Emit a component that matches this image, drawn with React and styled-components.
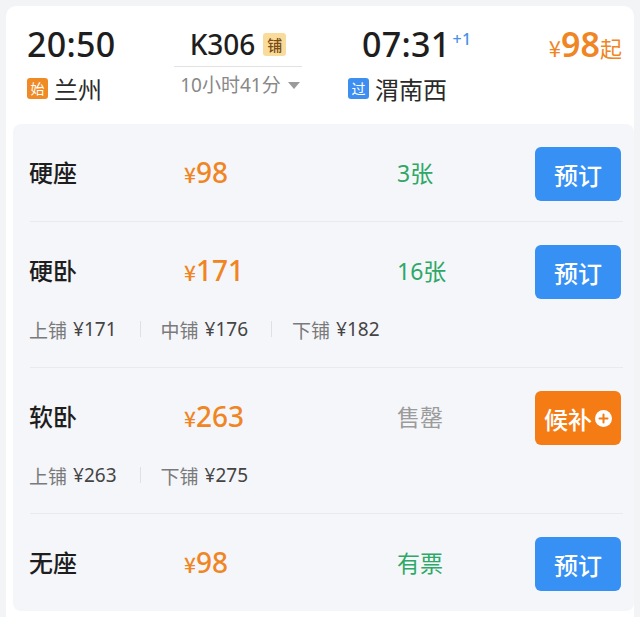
import React from "react";
import styled, { createGlobalStyle } from "styled-components";

const Global = createGlobalStyle`
  html, body { margin: 0; padding: 0; background: #f3f4f6; }
  body { font-family: "Noto Sans", "Noto Sans CJK SC", sans-serif; color: #222; }
  * { box-sizing: border-box; }
`;

const Card = styled.div`
  margin: 6px 6px 0 6px;
  background: #fff;
  border-radius: 10px 10px 0 0;
  padding: 0 0 6px 7px;
`;

const Header = styled.div`
  display: flex;
  align-items: flex-start;
  padding: 18px 12px 22px 14px;
`;

const Col = styled.div`
  display: flex;
  flex-direction: column;
  width: ${(p) => p.$w || "auto"};
  flex: ${(p) => (p.$grow ? 1 : "none")};
  margin-left: ${(p) => p.$ml || 0};
`;

const Time = styled.div`
  font-size: 34px;
  line-height: 40px;
  color: #1e1e1e;
  font-weight: 500;
  letter-spacing: 0.3px;
  padding-left: ${(p) => p.$indent || "0px"};
  display: flex;
  align-items: flex-start;
`;

const Sup = styled.span`
  font-size: 16px;
  line-height: 22px;
  color: #4b8fe6;
  margin-left: 2px;
  margin-top: 4px;
`;

const Station = styled.div`
  display: flex;
  align-items: center;
  margin-top: 10px;
  height: 28px;
  font-size: 24px;
  color: #2a2a2a;
  font-family: "Noto Sans CJK SC", sans-serif;
`;

const Badge = styled.span`
  display: inline-flex;
  align-items: center;
  justify-content: center;
  width: ${(p) => p.$size || "21px"};
  height: ${(p) => p.$size || "21px"};
  border-radius: 3px;
  background: ${(p) => p.$bg};
  color: ${(p) => p.$fg || "#fff"};
  font-size: ${(p) => p.$font || "14px"};
  line-height: 1;
  margin: ${(p) => p.$margin || "0 6px 0 0"};
  font-family: "Noto Sans CJK SC", sans-serif;
`;

const Train = styled.div`
  display: flex;
  align-items: center;
  justify-content: center;
  height: 40px;
  font-size: 28px;
  color: #1e1e1e;
  font-weight: 500;
  border-bottom: 1px solid #e2e2e2;
  padding-bottom: 2px;
  box-sizing: content-box;
`;

const Duration = styled.div`
  display: flex;
  align-items: center;
  justify-content: center;
  height: 28px;
  margin-top: 3px;
  font-size: 19px;
  color: #888;
  padding-left: 4px;
`;

const Tri = styled.span`
  width: 0;
  height: 0;
  border-left: 6px solid transparent;
  border-right: 6px solid transparent;
  border-top: 7px solid #9a9a9a;
  margin-left: 7px;
  margin-top: 3px;
`;

const From = styled.div`
  display: flex;
  align-items: baseline;
  color: #f08524;
  height: 40px;
  line-height: 40px;
`;

const Small = styled.span`
  font-size: ${(p) => p.$size || "22px"};
  font-weight: ${(p) => p.$weight || 400};
  font-family: "Noto Sans CJK SC", sans-serif;
`;

const Big = styled.span`
  font-size: ${(p) => p.$size || "34px"};
  font-weight: ${(p) => p.$weight || 600};
`;

const Panel = styled.div`
  background: #f5f6fa;
  border-radius: 8px;
`;

const Row = styled.div`
  display: flex;
  flex-direction: column;
  padding: 23px 13px 20px 16px;
`;

const Main = styled.div`
  display: grid;
  grid-template-columns: 155px 213px 1fr auto;
  align-items: center;
  height: 54px;
`;

const Name = styled.div`
  font-size: 24px;
  font-weight: 500;
  color: #1e1e1e;
  padding-bottom: 5px;
  font-family: "Noto Sans CJK SC", sans-serif;
`;

const Price = styled.div`
  display: flex;
  align-items: baseline;
  color: #f08524;
  padding-bottom: 4px;
`;

const Count = styled.div`
  font-size: 23px;
  padding-bottom: 4px;
  color: ${(p) => (p.$sold ? "#9b9b9b" : "#2ea866")};
  font-family: "Noto Sans", "Noto Sans CJK SC", sans-serif;
`;

const Button = styled.div`
  width: 86px;
  height: 54px;
  border-radius: 6px;
  background: ${(p) => (p.$wait ? "#f57c14" : "#3790f3")};
  color: #fff;
  font-size: 24px;
  font-weight: 500;
  display: flex;
  align-items: center;
  justify-content: center;
  font-family: "Noto Sans CJK SC", sans-serif;
`;

const Plus = styled.span`
  width: 17px;
  height: 17px;
  border-radius: 50%;
  background: #fff;
  margin-left: 3px;
  display: inline-flex;
  align-items: center;
  justify-content: center;
`;

const Sub = styled.div`
  display: flex;
  align-items: center;
  height: 24px;
  margin-top: 18px;
  margin-bottom: 6px;
  font-size: 19px;
  color: #444;
`;

const Label = styled.span`
  color: #7a7a7a;
  margin-right: 6px;
  font-family: "Noto Sans CJK SC", sans-serif;
`;

const VSep = styled.span`
  width: 1px;
  height: 16px;
  background: #e0e0e0;
  margin: 0 20px 0 23px;
`;

const HSep = styled.div`
  height: 1px;
  background: #e8eaee;
  margin: 0 11px 0 17px;
`;

const seats = [
  { name: "硬座", price: "98", count: "3张" },
  {
    name: "硬卧",
    price: "171",
    count: "16张",
    sub: [
      ["上铺", "171"],
      ["中铺", "176"],
      ["下铺", "182"],
    ],
  },
  {
    name: "软卧",
    price: "263",
    count: "售罄",
    sold: true,
    sub: [
      ["上铺", "263"],
      ["下铺", "275"],
    ],
  },
  { name: "无座", price: "98", count: "有票" },
];

export default function App() {
  return (
    <>
      <Global />
      <Card>
        <Header>
          <Col $w="147px">
            <Time>20:50</Time>
            <Station>
              <Badge $bg="#f08a24">始</Badge>兰州
            </Station>
          </Col>
          <Col $w="128px">
            <Train>
              K306
              <Badge $bg="#f9dc9c" $fg="#7a4b12" $size="23px" $font="15px" $margin="0 0 0 8px">
                铺
              </Badge>
            </Train>
            <Duration>
              10小时41分<Tri />
            </Duration>
          </Col>
          <Col $grow $ml="46px">
            <Time $indent="14px">
              07:31<Sup>+1</Sup>
            </Time>
            <Station>
              <Badge $bg="#3d8ef0">过</Badge>渭南西
            </Station>
          </Col>
          <Col>
            <From>
              <Small>¥</Small>
              <Big>98</Big>
              <Small>起</Small>
            </From>
          </Col>
        </Header>
        <Panel>
          {seats.map((s, i) => (
            <React.Fragment key={s.name}>
              {i > 0 && <HSep />}
              <Row>
                <Main>
                  <Name>{s.name}</Name>
                  <Price>
                    <Small $size="21px" $weight={500}>¥</Small>
                    <Big $size="28px" $weight={500}>{s.price}</Big>
                  </Price>
                  <Count $sold={s.sold}>{s.count}</Count>
                  {s.sold ? (
                    <Button $wait>
                      候补
                      <Plus>
                        <svg width="11" height="11" viewBox="0 0 11 11">
                          <path d="M5.5 1.5v8M1.5 5.5h8" stroke="#f57c14" strokeWidth="2" strokeLinecap="round" />
                        </svg>
                      </Plus>
                    </Button>
                  ) : (
                    <Button>预订</Button>
                  )}
                </Main>
                {s.sub && (
                  <Sub>
                    {s.sub.map(([l, p], j) => (
                      <React.Fragment key={l}>
                        {j > 0 && <VSep />}
                        <Label>{l}</Label>¥{p}
                      </React.Fragment>
                    ))}
                  </Sub>
                )}
              </Row>
            </React.Fragment>
          ))}
        </Panel>
      </Card>
    </>
  );
}
